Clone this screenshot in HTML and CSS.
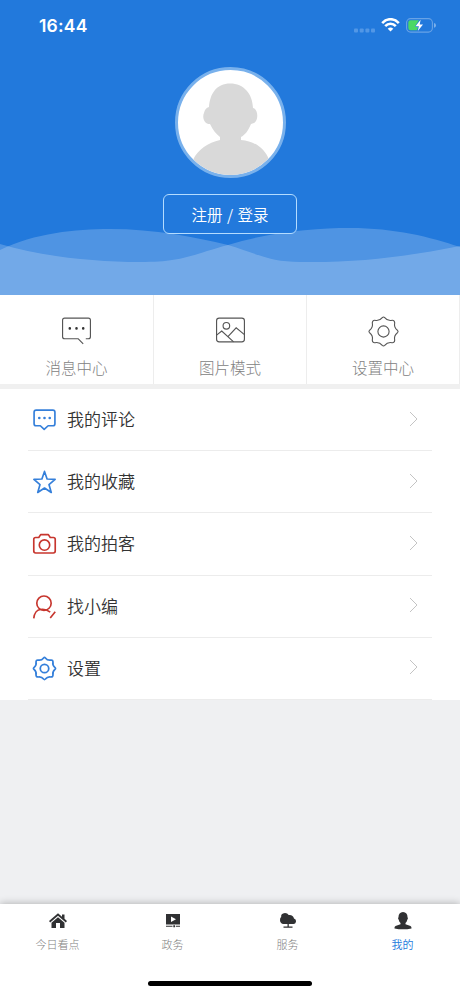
FILE: index.html
```html
<!DOCTYPE html>
<html lang="zh-CN">
<head>
<meta charset="utf-8">
<title>我的</title>
<link rel="stylesheet" href="styles.css">
</head>
<body>
<svg class="defs" width="0" height="0">
  <symbol id="gear" viewBox="-16.5 -16.5 33 33">
    <path d="M-1.200-13.900Q0-15.200 1.200-13.900Q4.100-10.200 8.600-11.200Q11-11.400 11.200-8.600Q10.200-4.100 13.900-1.200Q15.200 0 13.900 1.200Q10.200 4.100 11.200 8.600Q11 11.400 8.600 11.200Q4.100 10.200 1.200 13.900Q0 15.200-1.200 13.900Q-4.100 10.200-8.600 11.200Q-11 11.400-11.200 8.600Q-10.200 4.100-13.900 1.200Q-15.200 0-13.900-1.200Q-10.200-4.100-11.200-8.600Q-11-11.400-8.600-11.200Q-4.100-10.200-1.200-13.900Z"/>
    <circle r="5.6"/>
  </symbol>
  <symbol id="chevron" viewBox="0 0 9 16"><path d="M1 1l7 7-7 7"/></symbol>
</svg>
<div class="app">
  <header class="hero">
    <svg class="waves" viewBox="0 0 460 71" width="460" height="71">
      <path d="M0 26C35 9 75 5 110 5C155 5 195 13 228 21C253 28 268 38 300 38C360 39 410 32 460 22V71H0Z"/>
      <path d="M0 20C45 33 95 38 140 38C184 38 190 31 228 21C270 8 315 4 350 4C395 4 430 13 460 23V71H0Z"/>
    </svg>
    <div class="status">
      <span class="time">16:44</span>
      <div class="status-icons">
        <svg width="22" height="5" viewBox="0 0 22 5" fill="#5297e6"><rect x="0" y=".5" width="4" height="4" rx="1"/><rect x="5.7" y=".5" width="4" height="4" rx="1"/><rect x="11.4" y=".5" width="4" height="4" rx="1"/><rect x="17" y=".5" width="4" height="4" rx="1"/></svg>
        <svg class="wifi" width="19" height="14" viewBox="0 0 19 14" fill="none" stroke="#fff" stroke-width="2.6"><path d="M1.2 5.1C6-.1 13-.1 17.8 5.1"/><path d="M4.2 8.2C7.2 5 11.8 5 14.8 8.2"/><path d="M6.7 10.7Q9.5 8.2 12.3 10.7L9.5 13.6Z" fill="#fff" stroke="none"/></svg>
        <svg class="battery" width="30" height="15" viewBox="0 0 30 15"><rect x=".6" y=".6" width="25.8" height="13.5" rx="4" fill="none" stroke="#68a3e6" stroke-width="1.1"/><path d="M28 5q2 .5 2 2.4T28 9.8Z" fill="#7cb0ea"/><path d="M4.5 2.3H13L9.5 7.5V9H12L11 12.3H4.5Q2.3 12.3 2.3 10V4.5Q2.3 2.3 4.5 2.3Z" fill="#4bd865"/><path d="M14.6 1.8L9.5 8.3H12.9L11.8 13L17 6.5H13.7Z" fill="#fff"/></svg>
      </div>
    </div>
    <div class="avatar">
      <svg width="105" height="105" viewBox="0 0 105 105" fill="#d9d9d9"><path d="M52 13.5C66 13.5 74.500 24 75 38C80 39 81 50 76 53L73 54C70 61 67 65 63 67V70C76 71 87 78 91 90L105 105H0L15 90C20 79 30 73 42 70V67C38 64 35 60 32 54C26 54 24 47 26 43Q27 38 31 37C32 23 39 13.5 52 13.500Z"/></svg>
    </div>
    <button class="login">注册 / 登录</button>
  </header>

  <nav class="shortcuts">
    <a class="shortcut"><svg width="32" height="32" viewBox="0 0 32 32"><path d="M18 23H4.500Q2.500 23 2.500 21V5Q2.500 3 4.500 3H27.500Q29.500 3 29.500 5V21Q29.500 23 27.500 23H25M17.500 23L22.500 28"/><path class="dots" d="M9.500 13h.01M16 13h.01M22.500 13h.01"/></svg><span>消息中心</span></a>
    <a class="shortcut"><svg width="32" height="32" viewBox="0 0 32 32"><rect x="2.500" y="3" width="27" height="23" rx="2.500"/><circle cx="12" cy="10.500" r="3.200"/><path d="M2.500 19.500L7.500 15.500L19 26M13.500 21L21.500 12.500L29.500 19"/></svg><span>图片模式</span></a>
    <a class="shortcut"><svg width="33" height="33"><use href="#gear"/></svg><span>设置中心</span></a>
  </nav>

  <main class="menu">
    <a class="row blue"><svg class="icon" viewBox="0 0 24 24"><path d="M8 18H4Q2 18 2 16V5Q2 3 4 3H20Q22 3 22 5V16Q22 18 20 18H15.500L11.700 21.500Z"/><path class="dots" d="M7 10.500h.01M12 10.500h.01M17 10.500h.01"/></svg><span>我的评论</span><svg class="arrow"><use href="#chevron"/></svg></a>
    <a class="row blue"><svg class="icon" viewBox="0 0 24 24"><path d="M12 2.300L14.500 9.600L22.200 10L16.300 14.900L18.500 22.500L12 18.300L5.500 22.500L7.700 14.900L1.800 10L9.500 9.600Z"/></svg><span>我的收藏</span><svg class="arrow"><use href="#chevron"/></svg></a>
    <a class="row red"><svg class="icon" viewBox="0 0 24 24"><path d="M3.500 6.200H6.500L8.300 3.500H15.700L17.500 6.200H20.500Q22.300 6.200 22.300 8V19.300Q22.300 21.100 20.500 21.100H3.500Q1.700 21.100 1.700 19.300V8Q1.700 6.200 3.500 6.200Z"/><circle cx="12" cy="13.500" r="5"/></svg><span>我的拍客</span><svg class="arrow"><use href="#chevron"/></svg></a>
    <a class="row red"><svg class="icon" viewBox="0 0 24 24"><circle cx="11.500" cy="8.800" r="6.900"/><path d="M1.700 23.400C2.200 18.400 5 15.200 8 14.900Q13 13.900 17.500 17.400M22.300 17L17.500 23"/></svg><span>找小编</span><svg class="arrow"><use href="#chevron"/></svg></a>
    <a class="row blue"><svg class="icon gear"><use href="#gear"/></svg><span>设置</span><svg class="arrow"><use href="#chevron"/></svg></a>
  </main>

  <footer class="tabs">
    <div class="tab-list">
      <a class="tab"><svg width="20" height="20" viewBox="0 0 20 20"><path d="M10 2.200L1 10L2.200 11.500L10 4.800L17.800 11.500L19 10L16.500 7.800V3.500H14V5.700Z"/><path d="M10 6.200L3.500 11.800V17H8V12H12V17H16.500V11.800Z"/></svg><span>今日看点</span></a>
      <a class="tab"><svg width="20" height="20" viewBox="0 0 20 20"><path fill-rule="evenodd" d="M3 3H17V13.500H3ZM8 5.500V11L13 8.200Z"/><path d="M3 14.700H9.500V15.800H3ZM10.300 14.200H12V16.300H10.300ZM12.800 14.700H17V15.800H12.800Z"/></svg><span>政务</span></a>
      <a class="tab"><svg width="20" height="20" viewBox="0 0 20 20"><path d="M5 13Q2 12 2 9Q2 6.500 3.200 6Q2.500 2.500 7 2Q9.500 2 10.700 4Q15 3.500 16 7.500Q18.500 8.500 18 10.700Q17.500 13 15.500 13H10.800V15.500H14.500V16.700H5.500V15.500H9.500V13Z"/></svg><span>服务</span></a>
      <a class="tab active"><svg width="20" height="20" viewBox="0 0 20 20"><path d="M10 1Q14.500 1.300 14.500 6Q15.500 7.500 14.300 8.800Q13.800 11 12.500 12V13.300L17.500 15Q18.700 15.700 18.500 17.500Q10 19.200 1.500 17.500Q1.200 15.700 2.500 15L7.500 13.300V12Q6.200 11 5.700 8.800Q4.500 7.500 5.500 6Q5.500 1.300 10 1Z"/></svg><span>我的</span></a>
    </div>
    <div class="home-indicator"></div>
  </footer>
</div>
</body>
</html>
```
FILE: styles.css
```css
* { box-sizing: border-box; }
body {
  margin: 0;
  font-family: "Noto Sans CJK SC", sans-serif;
  background: #eff0f2;
}
.defs { position: absolute; }
.app {
  display: flex;
  flex-direction: column;
  width: 460px;
  height: 996px;
  overflow: hidden;
}
.hero {
  position: relative;
  display: flex;
  flex-direction: column;
  align-items: center;
  height: 295px;
  background: #2279dc;
}
.waves {
  position: absolute;
  left: 0;
  bottom: 0;
  fill: rgba(255, 255, 255, .205);
}
.status {
  display: flex;
  justify-content: space-between;
  align-items: center;
  width: 100%;
  height: 51px;
  padding: 0 24px 0 39px;
  color: #fff;
}
.time {
  font: 600 17.500px/24px Inter, sans-serif;
  letter-spacing: .2px;
}
.status-icons { display: flex; align-items: flex-end; }
.status-icons svg { display: block; }
.wifi { margin: 0 6px 1px 5px; }
.avatar {
  width: 111px;
  height: 111px;
  margin-top: 16px;
  border: 3px solid #79b1ec;
  border-radius: 50%;
  background: #fff;
  overflow: hidden;
}
.avatar svg { display: block; }
.login {
  position: relative;
  width: 134px;
  height: 40px;
  margin-top: 16px;
  padding: 0;
  border: 1.500px solid #b4dcff;
  border-radius: 6px;
  background: #2279dc;
  color: #fff;
  font: 350 15.500px/36px "Noto Sans CJK SC", sans-serif;
  word-spacing: 1px;
}
.shortcuts {
  display: grid;
  grid-template-columns: 154px 153px 153px;
  height: 94px;
  border-bottom: 5px solid #f0f0f0;
  background: #fff;
}
.shortcut {
  display: flex;
  flex-direction: column;
  align-items: center;
  padding-top: 20px;
  border-right: 1px solid #ededed;
  color: #828282;
  font-size: 15.500px;
  font-weight: 300;
  line-height: 24px;
}
.shortcut svg {
  width: 33px;
  height: 33px;
  margin-bottom: 7px;
  fill: none;
  stroke: #555;
  stroke-width: 1.100;
}
.dots { stroke-width: 2.500; stroke-linecap: round; }
.shortcut .dots { stroke: #333; }
.menu {
  height: 311px;
  padding: 0 28px;
  background: #fff;
}
.row {
  display: flex;
  align-items: center;
  height: 62.200px;
  padding: 0 14px 0 4px;
  border-bottom: 1px solid #ececec;
  color: #333;
  font-size: 17px;
  font-weight: 350;
}
.row span { flex: 1; margin-left: 10px; padding-bottom: 2px; }
.icon {
  width: 25px;
  height: 25px;
  fill: none;
  stroke-width: 1.600;
  stroke-linejoin: round;
}
.gear { stroke-width: 2.300; }
.blue .icon { stroke: #347fda; }
.red .icon { stroke: #c7362e; }
.arrow {
  width: 9px;
  height: 16px;
  margin-bottom: 2px;
  fill: none;
  stroke: #c4c4c4;
  stroke-width: 1;
}
.tabs {
  display: flex;
  flex-direction: column;
  align-items: center;
  justify-content: space-between;
  height: 92px;
  margin-top: auto;
  padding: 7px 0 10px;
  background: #fff;
  box-shadow: 0 -1px 7px rgba(0, 0, 0, .24);
}
.tab-list {
  display: grid;
  grid-template-columns: repeat(4, 1fr);
  width: 100%;
}
.tab {
  display: flex;
  flex-direction: column;
  align-items: center;
  gap: 5px;
  color: #808080;
  font-size: 11px;
  font-weight: 300;
  line-height: 16px;
}
.tab svg { fill: #303133; }
.active { color: #2279dc; font-weight: 350; }
.home-indicator {
  width: 164px;
  height: 5px;
  border-radius: 3px;
  background: #000;
}
```
